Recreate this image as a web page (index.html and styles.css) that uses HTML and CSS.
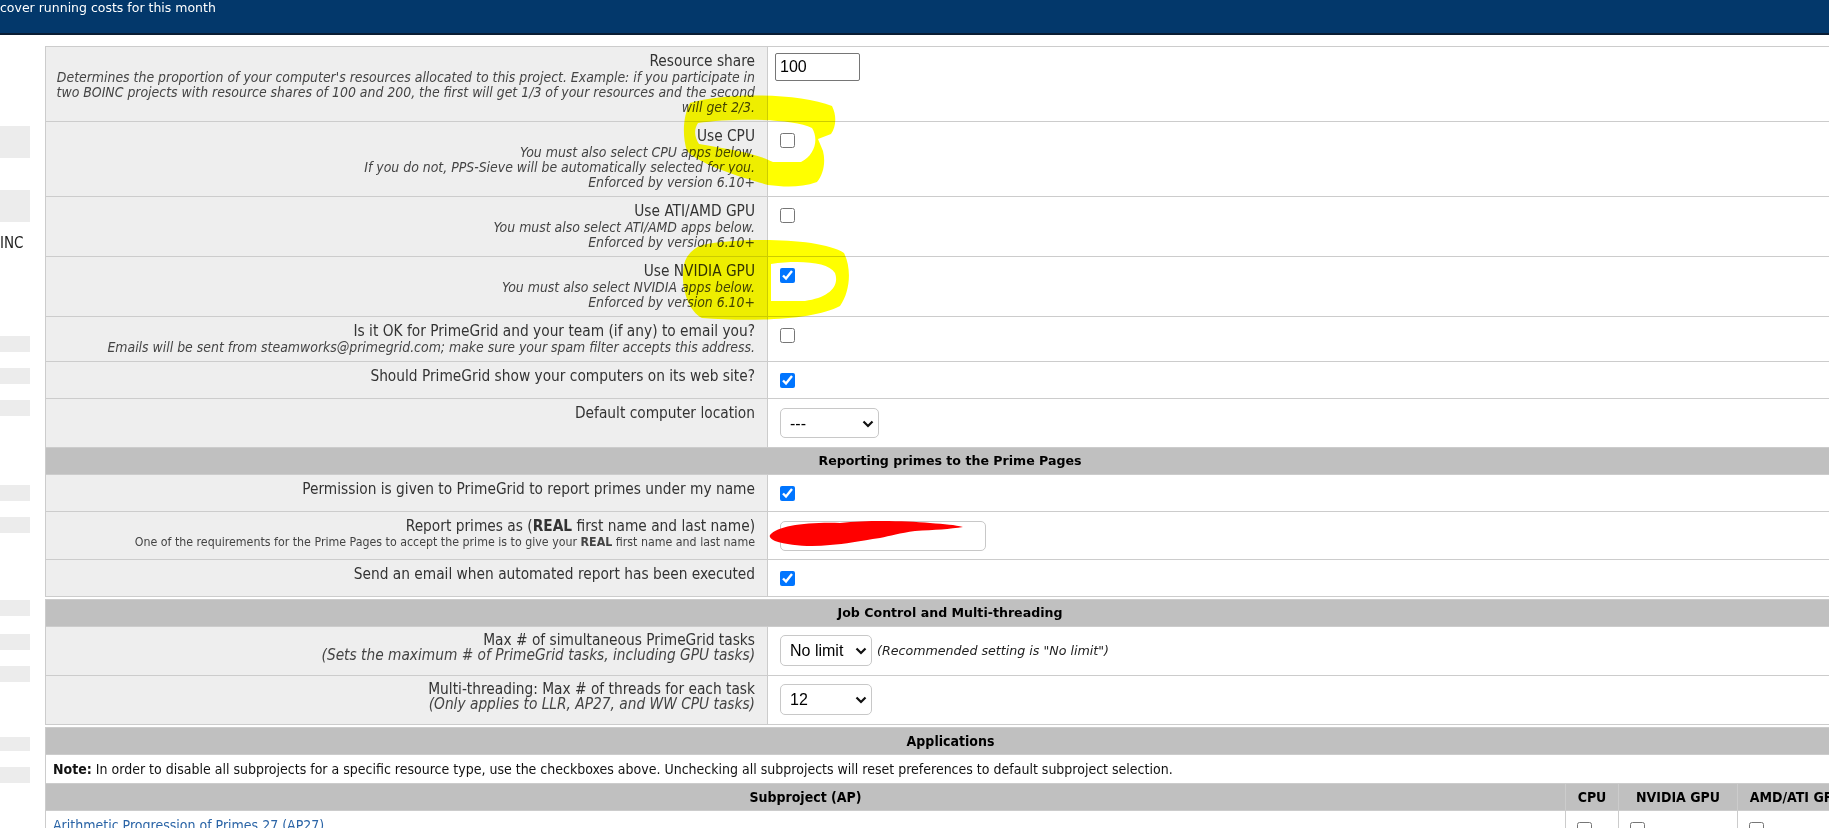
FILE: index.html
```
<!DOCTYPE html>
<html lang="en">
<head>
  <meta charset="UTF-8">
  <title>PrimeGrid preferences</title>
  <link rel="stylesheet" href="styles.css">
</head>
<body>

  <div class="topbar">cover running costs for this month</div>

  <div class="page">
    <aside class="side">
      <div class="ghost tall first"></div>
      <div class="ghost tall gap32"></div>
      <div class="side-txt">INC</div>
      <div class="ghost gap84"></div>
      <div class="ghost"></div>
      <div class="ghost"></div>
      <div class="ghost gap69"></div>
      <div class="ghost"></div>
      <div class="ghost gap67"></div>
      <div class="ghost gap18"></div>
      <div class="ghost"></div>
      <div class="ghost short gap55"></div>
      <div class="ghost"></div>
    </aside>

    <main class="prefs">
      <!-- project preferences -->
      <table class="tbl">
        <colgroup><col class="c-lbl"><col></colgroup>
        <tr>
          <td class="lbl">
            <div class="name">Resource share</div>
            <div class="hint">Determines the proportion of your computer's resources allocated to this project. Example: if you participate in<br>two BOINC projects with resource shares of 100 and 200, the first will get 1/3 of your resources and the second<br>will get 2/3.</div>
          </td>
          <td class="val"><input class="num" type="text" value="100"></td>
        </tr>
        <tr>
          <td class="lbl">
            <div class="name">Use CPU</div>
            <div class="hint">You must also select CPU apps below.<br>If you do not, PPS-Sieve will be automatically selected for you.<br>Enforced by version 6.10+</div>
          </td>
          <td class="val"><input type="checkbox"></td>
        </tr>
        <tr>
          <td class="lbl">
            <div class="name">Use ATI/AMD GPU</div>
            <div class="hint">You must also select ATI/AMD apps below.<br>Enforced by version 6.10+</div>
          </td>
          <td class="val"><input type="checkbox"></td>
        </tr>
        <tr>
          <td class="lbl">
            <div class="name">Use NVIDIA GPU</div>
            <div class="hint">You must also select NVIDIA apps below.<br>Enforced by version 6.10+</div>
          </td>
          <td class="val"><input type="checkbox" checked></td>
        </tr>
        <tr>
          <td class="lbl">
            <div class="name">Is it OK for PrimeGrid and your team (if any) to email you?</div>
            <div class="hint">Emails will be sent from steamworks@primegrid.com; make sure your spam filter accepts this address.</div>
          </td>
          <td class="val"><input type="checkbox"></td>
        </tr>
        <tr>
          <td class="lbl"><div class="name">Should PrimeGrid show your computers on its web site?</div></td>
          <td class="val"><input type="checkbox" checked></td>
        </tr>
        <tr>
          <td class="lbl"><div class="name">Default computer location</div></td>
          <td class="val">
            <span class="sel loc">
              <select><option>---</option><option>home</option><option>school</option><option>work</option></select>
              <svg viewBox="0 0 12 8" width="12" height="8"><path d="M1.5 1.5 L6 6 L10.5 1.5" fill="none" stroke="#111" stroke-width="2.2"/></svg>
            </span>
          </td>
        </tr>
        <tr><td class="head" colspan="2">Reporting primes to the Prime Pages</td></tr>
        <tr>
          <td class="lbl"><div class="name">Permission is given to PrimeGrid to report primes under my name</div></td>
          <td class="val"><input type="checkbox" checked></td>
        </tr>
        <tr>
          <td class="lbl">
            <div class="name">Report primes as (<b>REAL</b> first name and last name)</div>
            <div class="hint small">One of the requirements for the Prime Pages to accept the prime is to give your <b>REAL</b> first name and last name</div>
          </td>
          <td class="val"><input class="realname" type="text" value=""></td>
        </tr>
        <tr>
          <td class="lbl"><div class="name">Send an email when automated report has been executed</div></td>
          <td class="val"><input type="checkbox" checked></td>
        </tr>
      </table>

      <!-- job control -->
      <table class="tbl job">
        <colgroup><col class="c-lbl"><col></colgroup>
        <tr><td class="head" colspan="2">Job Control and Multi-threading</td></tr>
        <tr>
          <td class="lbl">
            <div class="name">Max # of simultaneous PrimeGrid tasks</div>
            <div class="hint">(Sets the maximum # of PrimeGrid tasks, including GPU tasks)</div>
          </td>
          <td class="val">
            <div class="ctl">
              <span class="sel">
                <select><option>No limit</option><option>1</option><option>2</option><option>4</option></select>
                <svg viewBox="0 0 12 8" width="12" height="8"><path d="M1.5 1.5 L6 6 L10.5 1.5" fill="none" stroke="#111" stroke-width="2.2"/></svg>
              </span>
              <span class="rec">(Recommended setting is "No limit")</span>
            </div>
          </td>
        </tr>
        <tr>
          <td class="lbl">
            <div class="name">Multi-threading: Max # of threads for each task</div>
            <div class="hint">(Only applies to LLR, AP27, and WW CPU tasks)</div>
          </td>
          <td class="val">
            <div class="ctl">
              <span class="sel">
                <select><option>12</option><option>1</option><option>2</option><option>4</option><option>8</option></select>
                <svg viewBox="0 0 12 8" width="12" height="8"><path d="M1.5 1.5 L6 6 L10.5 1.5" fill="none" stroke="#111" stroke-width="2.2"/></svg>
              </span>
            </div>
          </td>
        </tr>
      </table>

      <!-- applications -->
      <table class="tbl apps">
        <colgroup><col class="c-sub"><col class="c-cpu"><col class="c-nv"><col class="c-amd"></colgroup>
        <tr><td class="head cond" colspan="4">Applications</td></tr>
        <tr><td class="note" colspan="4"><b>Note:</b> In order to disable all subprojects for a specific resource type, use the checkboxes above. Unchecking all subprojects will reset preferences to default subproject selection.</td></tr>
        <tr>
          <th>Subproject (AP)</th>
          <th>CPU</th>
          <th>NVIDIA GPU</th>
          <th>AMD/ATI GPU</th>
        </tr>
        <tr>
          <td class="app"><a href="#">Arithmetic Progression of Primes 27 (AP27)</a></td>
          <td class="box"><input type="checkbox"></td>
          <td class="box"><input type="checkbox"></td>
          <td class="box"><input type="checkbox"></td>
        </tr>
      </table>
    </main>
  </div>

  <!-- highlighter marks drawn over the page -->
  <svg class="marks hl" viewBox="0 0 1829 828" width="1829" height="828">
    <path fill="#ffff00" fill-rule="evenodd" d="M690 103 C725 92 800 93 832 106 C837 116 836 127 831 134 L818 139 L823 151 C826 163 823 175 817 182 C800 188 784 187 768 185 C744 178 702 166 687 151 C682 136 683 116 690 103 Z M698 123 C732 118 792 118 812 128 C819 139 815 155 801 162 L773 162 C756 153 722 148 699 144 C694 136 694 129 698 123 Z"/>
    <path fill="#ffff00" fill-rule="evenodd" d="M702 245 C742 237 822 238 844 253 C852 269 850 292 840 306 C815 320 750 322 702 318 C684 309 678 272 687 257 C691 251 696 247 702 245 Z M771 264 C800 260 828 262 835 273 C840 287 828 298 805 301 L771 301 Z"/>
  </svg>
  <svg class="marks" viewBox="0 0 1829 828" width="1829" height="828">
    <path fill="#ff0000" d="M770 535 C778 526 805 522 840 523 C870 520 905 521 930 523 C945 524 955 525 963 527 C950 529 935 530 915 531 C900 533 890 536 880 538 C860 541 845 544 830 545 C812 547 790 546 775 541 C771 539 769 537 770 535 Z"/>
  </svg>

</body>
</html>
```

FILE: styles.css
```
html, body {
  margin: 0;
  overflow: hidden;
  background: #fff;
}
body {
  font-family: "DejaVu Sans Condensed", "DejaVu Sans", sans-serif;
  font-stretch: condensed;
  color: #333;
}

.topbar {
  height: 33px;
  background: #03386b;
  border-bottom: 2px solid #0a1d33;
  color: #fff;
  font: 12.5px/15px "DejaVu Sans", sans-serif;
  font-stretch: normal;
  white-space: nowrap;
}

.page {
  display: flex;
}

/* cut off left column */
.side {
  flex: none;
  width: 45px;
}
.ghost {
  width: 30px;
  height: 16px;
  margin-top: 16px;
  background: #ececec;
}
.ghost.tall { height: 32px; }
.ghost.short { height: 14px; }
.ghost.first { margin-top: 91px; }
.ghost.gap32 { margin-top: 32px; }
.ghost.gap84 { margin-top: 84px; }
.ghost.gap69 { margin-top: 69px; }
.ghost.gap67 { margin-top: 67px; }
.ghost.gap18 { margin-top: 18px; }
.ghost.gap55 { margin-top: 55px; }
.side-txt {
  margin-top: 13px;
  font-size: 15px;
  line-height: 17px;
  color: #222;
  white-space: nowrap;
}

.prefs {
  flex: none;
  padding-top: 11px;
}

.tbl {
  border-collapse: collapse;
  table-layout: fixed;
  width: 1810px;
  margin-bottom: 2px;
}
.tbl td, .tbl th {
  border: 1px solid #ccc;
  vertical-align: top;
}
.c-lbl { width: 722px; }

.lbl {
  background: #eee;
  text-align: right;
  padding: 6px 12px 6px 2px;
}
.name {
  font-size: 15.3px;
  line-height: 17px;
}
.hint {
  font-size: 13.9px;
  line-height: 15px;
  font-style: italic;
  color: #444;
}
.hint.small {
  font-style: normal;
  font-size: 12.3px;
  line-height: 14px;
}
.job .name, .job .hint {
  font-size: 15.3px;
  line-height: 15px;
}

.val {
  background: #fff;
  padding: 6px 7px;
}
.val input[type="checkbox"] {
  display: block;
  width: 15px;
  height: 15px;
  margin: 5px 0 4px 5px;
}
input.num {
  display: block;
  box-sizing: border-box;
  width: 85px;
  height: 28px;
  margin: 0;
  padding: 0 4px;
  border: 1px solid #767676;
  border-radius: 2px;
  font: 16px "Liberation Sans", Arial, sans-serif;
  color: #000;
}
input.realname {
  display: block;
  box-sizing: border-box;
  width: 206px;
  height: 30px;
  margin: 3px 0 2px 5px;
  border: 1px solid #c8c8c8;
  border-radius: 5px;
}

.sel {
  position: relative;
  display: inline-block;
  vertical-align: top;
  margin: 3px 0 3px 5px;
}
.sel select {
  display: block;
  appearance: none;
  box-sizing: border-box;
  width: 92px;
  height: 31px;
  margin: 0;
  padding: 0 0 0 9px;
  border: 1px solid #c8c8c8;
  border-radius: 5px;
  background: #fff;
  font: 16px "Liberation Sans", Arial, sans-serif;
  color: #000;
}
.sel.loc select {
  width: 99px;
  height: 30px;
}
.sel svg {
  position: absolute;
  right: 5px;
  top: 12px;
  pointer-events: none;
}
.ctl {
  display: flex;
  align-items: center;
  margin: 2px 0 3px;
}
.ctl .sel { margin: 0 0 0 5px; }
.rec {
  margin-left: 5px;
  font: italic 12.65px "DejaVu Sans", sans-serif;
  font-stretch: normal;
  color: #222;
}

.head {
  background: #c0c0c0;
  text-align: center;
  padding: 5px;
  font: bold 12.6px/16px "DejaVu Sans", sans-serif;
  font-stretch: normal;
  color: #000;
}
.head.cond {
  font-family: "DejaVu Sans Condensed", "DejaVu Sans", sans-serif;
  font-stretch: condensed;
  font-size: 14px;
}

.c-sub { width: 1520px; }
.c-cpu { width: 53px; }
.c-nv { width: 119px; }
.c-amd { width: 118px; }

.note {
  padding: 7px 7px 6px;
  font-size: 14px;
  line-height: 15px;
  color: #111;
}
.apps th {
  background: #c0c0c0;
  padding: 5px;
  font-size: 14px;
  line-height: 16px;
  color: #000;
}
.app {
  padding: 7px;
  font-size: 14px;
  line-height: 15px;
}
.app a {
  color: #2a64a6;
  text-decoration: none;
}
.box {
  padding: 7px;
}
.box input[type="checkbox"] {
  display: block;
  width: 15px;
  height: 15px;
  margin: 4px 0 0 4px;
}

/* annotation layers */
.marks {
  position: absolute;
  top: 0;
  left: 0;
  pointer-events: none;
}
.marks.hl {
  mix-blend-mode: multiply;
}
```
